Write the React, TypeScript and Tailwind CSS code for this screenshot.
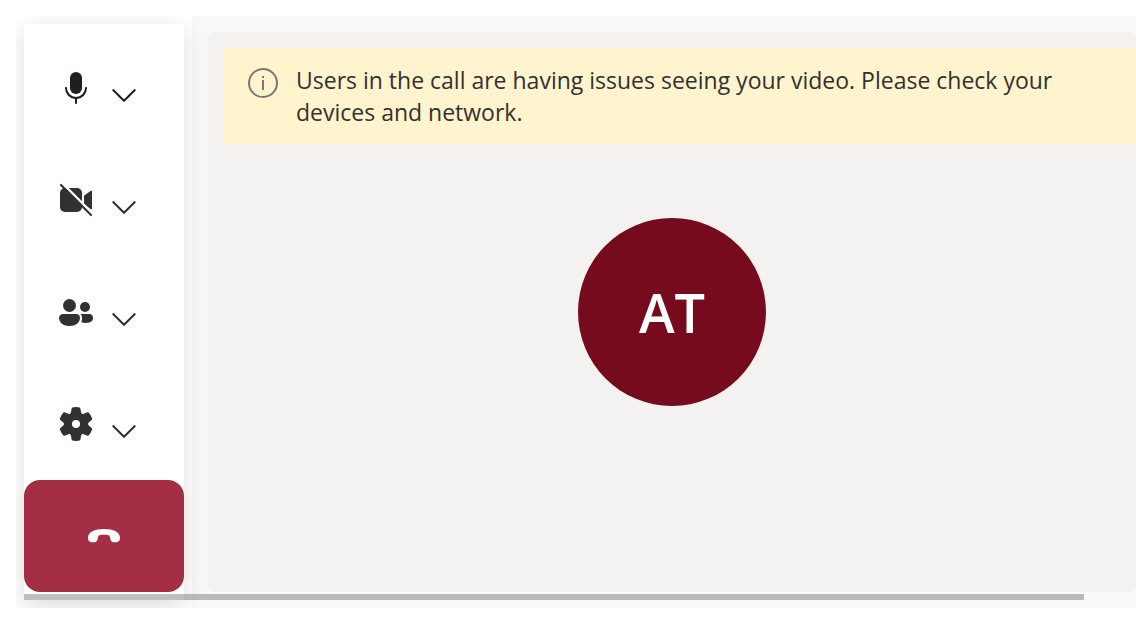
import type { ReactNode } from "react";

function Icon({ children, className = "" }: { children: ReactNode; className?: string }) {
  return (
    <svg viewBox="0 0 20 20" fill="currentColor" aria-hidden="true" className={`size-10 ${className}`}>
      {children}
    </svg>
  );
}

function MicIcon() {
  return (
    <Icon>
      <path d="M10 13a3 3 0 0 0 3-3V5a3 3 0 1 0-6 0v5a3 3 0 0 0 3 3Z" />
      <path d="M5 9.5c.28 0 .5.22.5.5a4.5 4.5 0 1 0 9 0 .5.5 0 0 1 1 0 5.5 5.5 0 0 1-5 5.48v2.02a.5.5 0 0 1-1 0v-2.02a5.5 5.5 0 0 1-5-5.48c0-.28.22-.5.5-.5Z" />
    </Icon>
  );
}

function VideoOffIcon() {
  return (
    <Icon>
      <rect x="2" y="4" width="11" height="12" rx="2.5" />
      <path d="M14 7.93v4.14l3.19 2.42c.33.25.81.02.81-.4V5.9c0-.4-.48-.64-.81-.4L14 7.93Z" />
      <path d="M2.5 .9 19.1 17.5" stroke="#fff" strokeWidth="1.2" fill="none" />
      <path d="M2.5 2.5 17.5 17.5" stroke="currentColor" strokeWidth="1.1" strokeLinecap="round" fill="none" />
    </Icon>
  );
}

function PeopleIcon() {
  return (
    <Icon>
      <circle cx="6.75" cy="6.75" r="3.25" />
      <circle cx="14.5" cy="7.5" r="2.5" />
      <path d="M1.5 13c0-1.1.9-2 2-2H10a2 2 0 0 1 2 2v.1l-.02.2a3.92 3.92 0 0 1-.9 2.06C10.33 16.29 9.01 17 6.75 17s-3.58-.71-4.33-1.64a3.92 3.92 0 0 1-.9-2.07L1.5 13.1V13Z" />
      <path d="M13 13c0-.76-.28-1.46-.75-2H16.5a2 2 0 0 1 2 2v.08c-.03.5-.26 1.12-.72 1.6-.6.53-1.6.82-3.03.82-.87 0-1.57-.11-2.12-.32.2-.45.3-.86.34-1.2.02-.2.03-.4.03-.6V13Z" />
    </Icon>
  );
}

function SettingsIcon() {
  return (
    <Icon>
      <path d="M1.91 7.38A8.5 8.5 0 0 1 3.7 4.3a.5.5 0 0 1 .54-.13l1.92.68a1 1 0 0 0 1.32-.76l.36-2a.5.5 0 0 1 .4-.4 8.53 8.53 0 0 1 3.55 0c.2.04.35.2.38.4l.37 2a1 1 0 0 0 1.32.76l1.92-.68a.5.5 0 0 1 .54.13 8.5 8.5 0 0 1 1.78 3.08.5.5 0 0 1-.15.54l-1.56 1.32a1 1 0 0 0 0 1.52l1.56 1.32a.5.5 0 0 1 .15.54 8.5 8.5 0 0 1-1.78 3.08.5.5 0 0 1-.54.13l-1.92-.68a1 1 0 0 0-1.32.76l-.37 2a.5.5 0 0 1-.38.4 8.53 8.53 0 0 1-3.56 0 .5.5 0 0 1-.39-.4l-.36-2a1 1 0 0 0-1.32-.76l-1.92.68a.5.5 0 0 1-.54-.13 8.5 8.5 0 0 1-1.78-3.08.5.5 0 0 1 .15-.54l1.56-1.32a1 1 0 0 0 0-1.52L2.06 7.92a.5.5 0 0 1-.15-.54ZM8 10a2 2 0 1 0 4 0 2 2 0 0 0-4 0Z" />
    </Icon>
  );
}

function CallEndIcon() {
  return (
    <Icon className="text-white">
      <path d="M2 10.9C2 8 5.2 6.5 10 6.5s8 1.5 8 4.4c0 1.4-.6 2.2-1.8 2.2h-1.3c-.9 0-1.4-.4-1.6-1.2l-.4-1.5c-.15-.6-.4-.8-.9-.9-1.2-.2-2.8-.2-4 0-.5.1-.75.3-.9.9l-.4 1.5c-.2.8-.7 1.2-1.6 1.2H3.8C2.6 13.1 2 12.3 2 10.9Z" />
    </Icon>
  );
}

function ChevronIcon() {
  return (
    <svg viewBox="0 0 24 14" aria-hidden="true" className="h-3.5 w-6">
      <path d="M.7 1.5 12 12.8 23.3 1.5" fill="none" stroke="currentColor" strokeWidth="2" />
    </svg>
  );
}

const controls = [
  { label: "Mute", icon: <MicIcon />, tone: "text-[#201f1e]" },
  { label: "Turn camera on", icon: <VideoOffIcon />, tone: "text-[#323130]" },
  { label: "People", icon: <PeopleIcon />, tone: "text-[#323130]" },
  { label: "Settings", icon: <SettingsIcon />, tone: "text-[#323130]" },
];

export default function App() {
  return (
    <div className="relative mt-4 ml-4 flex overflow-hidden bg-white font-['Open_Sans',sans-serif] text-[#323130]">
      <div className="relative z-10 shrink-0 p-2">
        <nav
          aria-label="Call controls"
          className="flex w-40 flex-col bg-white py-2 shadow-[0_6px_24px_rgba(0,0,0,0.14)]"
        >
          {controls.map((control) => (
            <div key={control.label} className={`flex h-28 items-center gap-4 px-8 ${control.tone}`}>
              <button type="button" aria-label={control.label}>
                {control.icon}
              </button>
              <button type="button" aria-label={`${control.label} options`} className="pt-3.5">
                <ChevronIcon />
              </button>
            </div>
          ))}
          <button
            type="button"
            aria-label="Leave call"
            className="flex h-28 items-center justify-center rounded-2xl bg-[#a42e43]"
          >
            <CallEndIcon />
          </button>
        </nav>
      </div>

      <main className="grid min-w-0 flex-1 bg-[#faf9f8] py-4 pl-4">
        <section className="grid rounded-lg bg-[#f3f2f1]">
          <div
            role="status"
            className="col-start-1 row-start-1 mt-4 ml-4 flex items-start gap-4 self-start bg-[#fff4ce] py-4 pr-16 pl-6"
          >
            <svg viewBox="0 0 32 32" fill="none" aria-hidden="true" className="mt-1 size-8 shrink-0 text-[#797775]">
              <circle cx="15" cy="15" r="14" stroke="currentColor" strokeWidth="2" />
              <path d="M15 12v10M15 8v2" stroke="currentColor" strokeWidth="2" />
            </svg>
            <p className="text-[23px] leading-8">
              Users in the call are having issues seeing your video. Please check your devices and network.
            </p>
          </div>
          <div className="col-start-1 row-start-1 flex size-47 items-center justify-center place-self-center rounded-full bg-[#750b1c] text-[54px] leading-none font-semibold text-white">
            AT
          </div>
        </section>
      </main>

      <div className="absolute right-13 bottom-2 left-2 z-20 h-1.5 bg-black/25" />
    </div>
  );
}
